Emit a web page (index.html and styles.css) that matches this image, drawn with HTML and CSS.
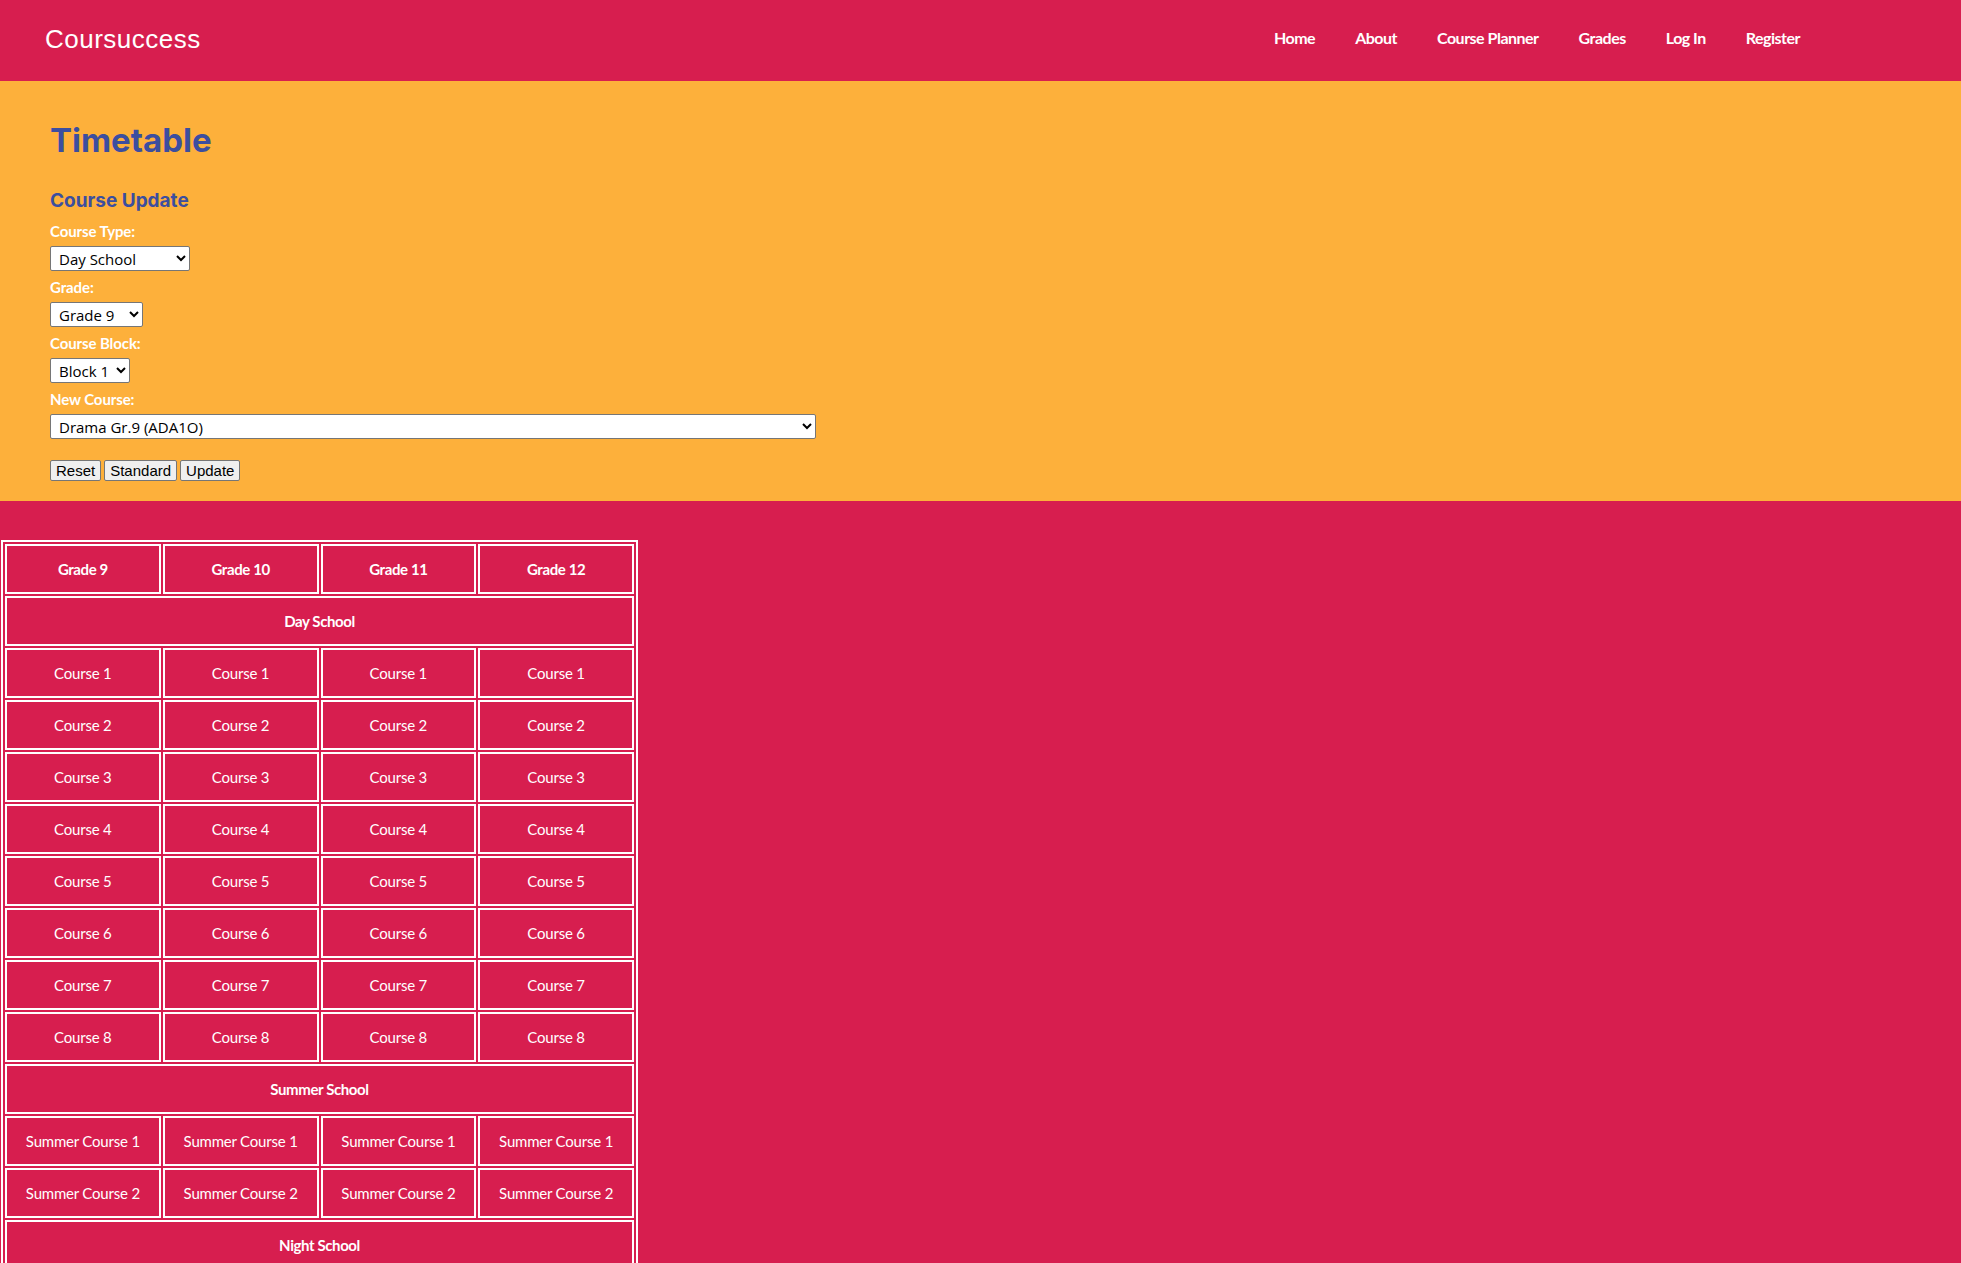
FILE: index.html
```html
<!DOCTYPE html>
<html lang="en">
<head>
<meta charset="utf-8">
<title>Coursuccess - Timetable</title>
<link rel="stylesheet" href="styles.css">
</head>
<body>
<header class="topbar">
  <a class="brand" href="#">Coursuccess</a>
  <nav class="nav">
    <a href="#">Home</a>
    <a href="#">About</a>
    <a href="#">Course Planner</a>
    <a href="#">Grades</a>
    <a href="#">Log In</a>
    <a href="#">Register</a>
  </nav>
</header>

<section class="panel">
  <h1 class="title">Timetable</h1>
  <h2 class="subtitle">Course Update</h2>
  <form class="form">
    <label class="label" for="type">Course Type:</label>
    <select id="type" class="sel sel-type"><option>Day School</option><option>Summer School</option><option>Night School</option></select>
    <label class="label" for="grade">Grade:</label>
    <select id="grade" class="sel sel-grade"><option>Grade 9</option><option>Grade 10</option><option>Grade 11</option><option>Grade 12</option></select>
    <label class="label" for="block">Course Block:</label>
    <select id="block" class="sel sel-block"><option>Block 1</option><option>Block 2</option></select>
    <label class="label" for="course">New Course:</label>
    <select id="course" class="sel sel-course"><option>Drama Gr.9 (ADA1O)</option></select>
    <div class="buttons">
      <button type="button" class="btn">Reset</button>
      <button type="button" class="btn">Standard</button>
      <button type="button" class="btn">Update</button>
    </div>
  </form>
</section>

<table class="tt">
  <tr class="head"><td>Grade 9</td><td>Grade 10</td><td>Grade 11</td><td>Grade 12</td></tr>
  <tr class="head"><td colspan="4">Day School</td></tr>
  <tr><td>Course 1</td><td>Course 1</td><td>Course 1</td><td>Course 1</td></tr>
  <tr><td>Course 2</td><td>Course 2</td><td>Course 2</td><td>Course 2</td></tr>
  <tr><td>Course 3</td><td>Course 3</td><td>Course 3</td><td>Course 3</td></tr>
  <tr><td>Course 4</td><td>Course 4</td><td>Course 4</td><td>Course 4</td></tr>
  <tr><td>Course 5</td><td>Course 5</td><td>Course 5</td><td>Course 5</td></tr>
  <tr><td>Course 6</td><td>Course 6</td><td>Course 6</td><td>Course 6</td></tr>
  <tr><td>Course 7</td><td>Course 7</td><td>Course 7</td><td>Course 7</td></tr>
  <tr><td>Course 8</td><td>Course 8</td><td>Course 8</td><td>Course 8</td></tr>
  <tr class="head"><td colspan="4">Summer School</td></tr>
  <tr><td>Summer Course 1</td><td>Summer Course 1</td><td>Summer Course 1</td><td>Summer Course 1</td></tr>
  <tr><td>Summer Course 2</td><td>Summer Course 2</td><td>Summer Course 2</td><td>Summer Course 2</td></tr>
  <tr class="head"><td colspan="4">Night School</td></tr>
</table>
</body>
</html>
```

FILE: styles.css
```css
html, body {
  margin: 0;
  padding: 0;
}
body {
  background: #d71e4f;
  font-family: "Lato", "Liberation Sans", sans-serif;
  color: #fff;
}
a { color: #fff; text-decoration: none; }

.topbar {
  height: 81px;
  box-sizing: border-box;
  display: flex;
  justify-content: space-between;
  align-items: flex-start;
  padding: 0 141px 0 45px;
}
.brand {
  font-family: "Liberation Sans", Arial, sans-serif;
  font-size: 26px;
  line-height: 30px;
  letter-spacing: 0.5px;
  margin-top: 24px;
}
.nav {
  display: flex;
  margin-top: 28px;
}
.nav a {
  font-family: "Lato", sans-serif;
  font-weight: 700;
  font-size: 16px;
  line-height: 20px;
  letter-spacing: -0.5px;
  padding: 0 20px;
}

.panel {
  background: #fdb03b;
  padding: 39px 50px 20px;
}
.title {
  margin: 0;
  font-family: "Inter", sans-serif;
  font-weight: 700;
  font-size: 33px;
  line-height: 40px;
  color: #3c4e9f;
}
.subtitle {
  margin: 29px 0 0;
  font-family: "Inter", sans-serif;
  font-weight: 700;
  font-size: 19px;
  line-height: 24px;
  color: #3c4e9f;
}
.form {
  margin-top: 8px;
  display: flex;
  flex-direction: column;
  align-items: flex-start;
}
.label {
  display: block;
  font-weight: 700;
  font-size: 15px;
  line-height: 20px;
  letter-spacing: -0.1px;
  margin-bottom: 5px;
}
.sel {
  display: block;
  box-sizing: border-box;
  height: 25px;
  margin: 0 0 6px;
  font-family: "Open Sans", "Noto Sans", sans-serif;
  font-size: 15px;
  color: #000;
  background: #fff;
  border: 1px solid #767676;
  border-radius: 2px;
  padding: 0 2px 0 4px;
}
.sel-type { width: 140px; }
.sel-grade { width: 93px; }
.sel-block { width: 80px; }
.sel-course { width: 766px; margin-bottom: 0; }

.buttons {
  display: flex;
  gap: 3px;
  margin-top: 21px;
}
.btn {
  box-sizing: border-box;
  height: 21px;
  padding: 0 5px;
  font-family: "Liberation Sans", Arial, sans-serif;
  font-size: 15px;
  line-height: 19px;
  color: #000;
  background: #efefef;
  border: 1px solid #767676;
  border-radius: 2px;
}

.tt {
  margin: 39px 0 0 1px;
  width: 637px;
  table-layout: fixed;
  border-collapse: separate;
  border-spacing: 2px;
  border: 2px solid #fff;
}
.tt td {
  height: 46px;
  padding: 0;
  border: 2px solid #fff;
  text-align: center;
  vertical-align: middle;
  font-family: "Lato", sans-serif;
  font-size: 15px;
  letter-spacing: -0.2px;
  color: #fff;
}
.tt .head td {
  font-weight: 700;
  letter-spacing: -0.4px;
}
```
